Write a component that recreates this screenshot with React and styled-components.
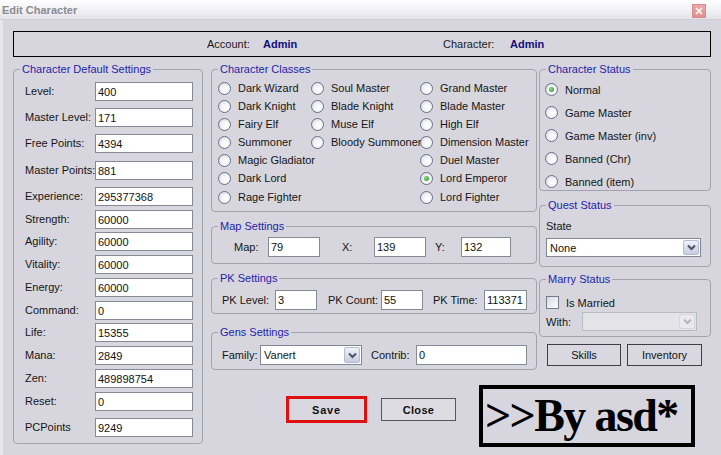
import React from 'react';
import styled, { createGlobalStyle } from 'styled-components';

const Global = createGlobalStyle`
  html, body { margin: 0; padding: 0; background: #d7d6de; }
  body { font-family: "Liberation Sans", Arial, sans-serif; font-size: 11px; color: #151515; }
  * { box-sizing: border-box; }
`;

const Window = styled.div`
  width: 721px;
  height: 455px;
  display: flex;
  flex-direction: column;
  background: #d7d6de;
  overflow: hidden;
`;

const TitleBar = styled.div`
  height: 20px;
  flex: none;
  display: flex;
  align-items: center;
  justify-content: space-between;
  padding: 0 15px 0 2px;
  background: linear-gradient(to bottom, #fefeff 0%, #f3f3f7 45%, #e3e3ea 100%);
  border-bottom: 1px solid #cfcfd7;
`;

const Title = styled.div`
  font-weight: bold;
  color: #8b8b92;
  font-size: 11px;
`;

const CloseBox = styled.div`
  width: 14px;
  height: 14px;
  margin-top: 3px;
  background: linear-gradient(#eaa8a8, #e09090);
  border: 1px solid #d88a8a;
  display: flex;
  align-items: center;
  justify-content: center;
`;

const Body = styled.div`
  flex: 1;
  display: flex;
  flex-direction: column;
  padding: 11px 10px 0 10px;
  border-left: 3px solid #e6e6ec;
`;

const HeaderBox = styled.div`
  height: 26px;
  border: 1px solid #000;
  display: flex;
  align-items: center;
  padding-left: 193px;
`;

const HeadLabel = styled.span`
  width: ${p => p.$w}px;
  flex: none;
  color: #1a1a1a;
`;

const HeadValue = styled.span`
  width: ${p => p.$w}px;
  flex: none;
  font-weight: bold;
  color: #10107a;
`;

const Main = styled.div`
  display: flex;
  align-items: flex-start;
  margin-top: 5px;
`;

const Group = styled.fieldset`
  margin: 0;
  margin-top: ${p => p.$mt || 0}px;
  padding: 0;
  border: 1px solid #a3a3ad;
  border-radius: 4px;
  min-width: 0;
`;

const GroupBody = styled.div`
  padding: ${p => p.$pad};
`;

const Legend = styled.legend`
  margin-left: 6px;
  padding: 0 2px;
  color: #2424aa;
  font-size: 11px;
  line-height: 14px;
`;

const StatRow = styled.div`
  height: ${p => p.$h}px;
  display: flex;
  align-items: flex-start;
`;

const StatLabel = styled.span`
  width: 70px;
  flex: none;
  line-height: 19px;
  white-space: nowrap;
`;

const Input = styled.input.attrs({ readOnly: true, type: 'text' })`
  width: ${p => p.$w}px;
  height: ${p => p.$h || 20}px;
  flex: none;
  margin: 0;
  padding: 0 2px;
  background: #fff;
  border: 1px solid #878a96;
  font: inherit;
  font-size: 11px;
  color: #111;
  outline: none;
`;

const LeftCol = styled.div`
  width: 190px;
  flex: none;
`;

const RightArea = styled.div`
  margin-left: 8px;
  display: flex;
  flex-direction: column;
`;

const TopRow = styled.div`
  display: flex;
  align-items: flex-start;
`;

const MidCol = styled.div`
  width: 326px;
  flex: none;
  display: flex;
  flex-direction: column;
`;

const SideCol = styled.div`
  width: 172px;
  margin-left: 2px;
  flex: none;
  display: flex;
  flex-direction: column;
`;

const ClassGrid = styled.div`
  display: grid;
  grid-template-columns: 93px 109px 1fr;
  grid-template-rows: repeat(6, 18px) 20px;
`;

const RadioItem = styled.div`
  display: flex;
  align-items: center;
  gap: 7px;
  white-space: nowrap;
  grid-column: ${p => p.$col};
  grid-row: ${p => p.$row};
`;

const RadioDot = styled.span`
  width: 13px;
  height: 13px;
  flex: none;
  border-radius: 50%;
  border: 1px solid #687086;
  background: radial-gradient(circle at 62% 62%, #ffffff 0%, #f3f3f7 45%, #cfd1dc 100%);
  display: flex;
  align-items: center;
  justify-content: center;
  &::after {
    content: '';
    width: 5px;
    height: 5px;
    border-radius: 50%;
    background: radial-gradient(circle at 40% 40%, #8be08b, #1d8a1d);
    display: ${p => (p.$checked ? 'block' : 'none')};
  }
`;

const StatusList = styled.div`
  display: flex;
  flex-direction: column;
  gap: 10px;
`;

const FieldRow = styled.div`
  display: flex;
  align-items: center;
`;

const Label = styled.span`
  width: ${p => p.$w}px;
  padding-left: ${p => p.$pl || 0}px;
  flex: none;
  white-space: nowrap;
`;

const Select = styled.div`
  width: ${p => p.$w}px;
  height: ${p => p.$h || 20}px;
  flex: none;
  display: flex;
  align-items: stretch;
  background: ${p => (p.$disabled ? '#e4e4e8' : '#fff')};
  border: 1px solid ${p => (p.$disabled ? '#b8bac4' : '#7f8797')};
`;

const SelectText = styled.span`
  flex: 1;
  padding-left: 3px;
  display: flex;
  align-items: center;
`;

const SelectArrow = styled.span`
  width: 16px;
  margin: 1px;
  flex: none;
  border-radius: 2px;
  border: 1px solid ${p => (p.$disabled ? '#d4d6de' : '#b4bcd2')};
  background: ${p => (p.$disabled ? '#eaeaee' : 'linear-gradient(#eef1f8, #c6cde0)')};
  display: flex;
  align-items: center;
  justify-content: center;
`;

const StateLabel = styled.div`
  line-height: 13px;
  margin-bottom: 5px;
`;

const CheckRow = styled.div`
  display: flex;
  align-items: center;
  gap: 7px;
  height: 13px;
  margin-bottom: 3px;
`;

const CheckBox = styled.span`
  width: 13px;
  height: 13px;
  flex: none;
  border: 1px solid #737b90;
  background: linear-gradient(135deg, #d8d9e2, #ffffff);
`;

const ButtonRow = styled.div`
  display: flex;
  gap: 6px;
  padding-left: 8px;
  margin-top: 7px;
`;

const WinButton = styled.div`
  width: ${p => p.$w}px;
  height: 22px;
  border: 1px solid #3e3e44;
  display: flex;
  align-items: center;
  justify-content: center;
  background: #d9d8e0;
  color: #111;
`;

const BottomRow = styled.div`
  display: flex;
  align-items: flex-start;
  padding-left: 75px;
`;

const SaveButton = styled.div`
  width: 81px;
  height: 27px;
  margin-top: 26px;
  border: 3px solid #e01010;
  background: #d9d8e0;
  display: flex;
  align-items: center;
  justify-content: center;
  font-weight: bold;
  letter-spacing: 0.8px;
  color: #111;
`;

const CloseButton = styled.div`
  width: 75px;
  height: 23px;
  margin-top: 28px;
  margin-left: 14px;
  border: 1px solid #55555c;
  background: #dddce3;
  display: flex;
  align-items: center;
  justify-content: center;
  font-weight: bold;
  letter-spacing: 0.3px;
  color: #111;
`;

const SignBox = styled.div`
  width: 216px;
  height: 62px;
  margin-top: 15px;
  margin-left: 23px;
  border: 4px solid #000;
  display: flex;
  align-items: center;
  padding-left: 2px;
  font-family: "Liberation Serif", "Times New Roman", serif;
  font-weight: bold;
  font-size: 46px;
  line-height: 1;
  letter-spacing: -1.6px;
  color: #000;
  white-space: nowrap;
`;

const Chevron = ({ color = '#4a5266' }) => (
  <svg width="9" height="7" viewBox="0 0 9 7">
    <path d="M1 1.5 L4.5 5 L8 1.5" fill="none" stroke={color} strokeWidth="2" />
  </svg>
);

const stats = [
  ['Level:', '400', 26],
  ['Master Level:', '171', 26],
  ['Free Points:', '4394', 27],
  ['Master Points:', '881', 26],
  ['Experience:', '295377368', 23],
  ['Strength:', '60000', 22],
  ['Agility:', '60000', 23],
  ['Vitality:', '60000', 23],
  ['Energy:', '60000', 23],
  ['Command:', '0', 22],
  ['Life:', '15355', 23],
  ['Mana:', '2849', 23],
  ['Zen:', '489898754', 23],
  ['Reset:', '0', 26],
  ['PCPoints', '9249', 19],
];

const classCols = [
  ['Dark Wizard', 'Dark Knight', 'Fairy Elf', 'Summoner', 'Magic Gladiator', 'Dark Lord', 'Rage Fighter'],
  ['Soul Master', 'Blade Knight', 'Muse Elf', 'Bloody Summoner'],
  ['Grand Master', 'Blade Master', 'High Elf', 'Dimension Master', 'Duel Master', 'Lord Emperor', 'Lord Fighter'],
];

const statuses = ['Normal', 'Game Master', 'Game Master (inv)', 'Banned (Chr)', 'Banned (item)'];

export default function App() {
  return (
    <>
      <Global />
      <Window>
        <TitleBar>
          <Title>Edit Character</Title>
          <CloseBox>
            <svg width="8" height="8" viewBox="0 0 8 8">
              <path d="M1 1 L7 7 M7 1 L1 7" stroke="#fff" strokeWidth="1.6" />
            </svg>
          </CloseBox>
        </TitleBar>
        <Body>
          <HeaderBox>
            <HeadLabel $w={56}>Account:</HeadLabel>
            <HeadValue $w={180}>Admin</HeadValue>
            <HeadLabel $w={67}>Character:</HeadLabel>
            <HeadValue $w={60}>Admin</HeadValue>
          </HeaderBox>
          <Main>
            <LeftCol>
              <Group>
                <Legend>Character Default Settings</Legend>
                <GroupBody $pad="6px 9px 6px 11px">
                  {stats.map(([label, value, h]) => (
                    <StatRow key={label} $h={h}>
                      <StatLabel>{label}</StatLabel>
                      <Input $w={98} $h={19} value={value} />
                    </StatRow>
                  ))}
                </GroupBody>
              </Group>
            </LeftCol>
            <RightArea>
              <TopRow>
                <MidCol>
                  <Group>
                    <Legend>Character Classes</Legend>
                    <GroupBody $pad="3px 0 4px 6px">
                      <ClassGrid>
                        {classCols.map((col, ci) =>
                          col.map((name, ri) => (
                            <RadioItem key={name} $col={ci + 1} $row={ri + 1}>
                              <RadioDot $checked={name === 'Lord Emperor'} />
                              {name}
                            </RadioItem>
                          ))
                        )}
                      </ClassGrid>
                    </GroupBody>
                  </Group>
                  <Group $mt={7}>
                    <Legend>Map Settings</Legend>
                    <GroupBody $pad="4px 0 6px 22px">
                      <FieldRow>
                        <Label $w={34}>Map:</Label>
                        <Input $w={52} value="79" />
                        <Label $w={54} $pl={22}>X:</Label>
                        <Input $w={52} value="139" />
                        <Label $w={35} $pl={9}>Y:</Label>
                        <Input $w={50} value="132" />
                      </FieldRow>
                    </GroupBody>
                  </Group>
                  <Group $mt={7}>
                    <Legend>PK Settings</Legend>
                    <GroupBody $pad="5px 0 3px 10px">
                      <FieldRow>
                        <Label $w={53}>PK Level:</Label>
                        <Input $w={42} value="3" />
                        <Label $w={64} $pl={11}>PK Count:</Label>
                        <Input $w={42} value="55" />
                        <Label $w={61} $pl={10}>PK Time:</Label>
                        <Input $w={43} value="113371" />
                      </FieldRow>
                    </GroupBody>
                  </Group>
                  <Group $mt={11}>
                    <Legend>Gens Settings</Legend>
                    <GroupBody $pad="6px 0 4px 10px">
                      <FieldRow>
                        <Label $w={38}>Family:</Label>
                        <Select $w={102}>
                          <SelectText>Vanert</SelectText>
                          <SelectArrow><Chevron /></SelectArrow>
                        </Select>
                        <Label $w={54} $pl={9}>Contrib:</Label>
                        <Input $w={111} value="0" />
                      </FieldRow>
                    </GroupBody>
                  </Group>
                </MidCol>
                <SideCol>
                  <Group>
                    <Legend>Character Status</Legend>
                    <GroupBody $pad="7px 0 2px 5px">
                      <StatusList>
                        {statuses.map(s => (
                          <RadioItem key={s}>
                            <RadioDot $checked={s === 'Normal'} />
                            {s}
                          </RadioItem>
                        ))}
                      </StatusList>
                    </GroupBody>
                  </Group>
                  <Group $mt={7}>
                    <Legend>Quest Status</Legend>
                    <GroupBody $pad="8px 0 9px 6px">
                      <StateLabel>State</StateLabel>
                      <Select $w={155} $h={19}>
                        <SelectText>None</SelectText>
                        <SelectArrow><Chevron /></SelectArrow>
                      </Select>
                    </GroupBody>
                  </Group>
                  <Group $mt={5}>
                    <Legend>Marry Status</Legend>
                    <GroupBody $pad="10px 0 5px 6px">
                      <CheckRow>
                        <CheckBox />
                        Is Married
                      </CheckRow>
                      <FieldRow>
                        <Label $w={36}>With:</Label>
                        <Select $w={115} $h={19} $disabled>
                          <SelectText />
                          <SelectArrow $disabled><Chevron color="#b0b4c0" /></SelectArrow>
                        </Select>
                      </FieldRow>
                    </GroupBody>
                  </Group>
                  <ButtonRow>
                    <WinButton $w={74}>Skills</WinButton>
                    <WinButton $w={75}>Inventory</WinButton>
                  </ButtonRow>
                </SideCol>
              </TopRow>
              <BottomRow>
                <SaveButton>Save</SaveButton>
                <CloseButton>Close</CloseButton>
                <SignBox>&gt;&gt;By asd*</SignBox>
              </BottomRow>
            </RightArea>
          </Main>
        </Body>
      </Window>
    </>
  );
}
